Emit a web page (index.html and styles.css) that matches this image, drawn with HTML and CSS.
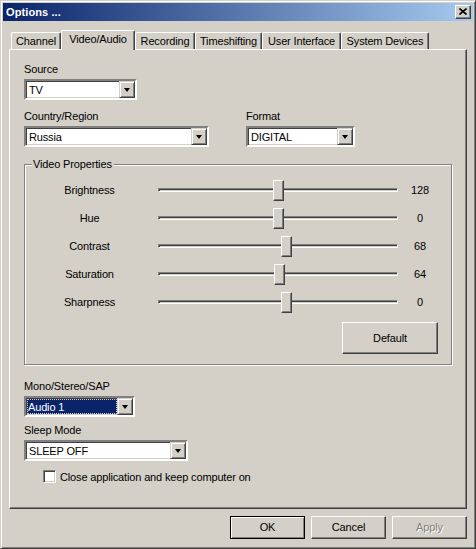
FILE: index.html
```html
<!DOCTYPE html>
<html>
<head>
<meta charset="utf-8">
<link rel="stylesheet" href="styles.css">
</head>
<body>
<div class="window">
  <div class="titlebar">
    <span class="title">Options ...</span>
    <span class="close"><svg width="8" height="7" viewBox="0 0 8 7"><path d="M0.5 0.5 L7.5 6.5 M7.5 0.5 L0.5 6.5" stroke="#000" stroke-width="1.6" fill="none"/></svg></span>
  </div>
  <div class="client">
    <div class="tabs">
      <div class="tab t-channel">Channel</div>
      <div class="tab tab-active t-video">Video/Audio</div>
      <div class="tab t-rec">Recording</div>
      <div class="tab t-time">Timeshifting</div>
      <div class="tab t-ui">User Interface</div>
      <div class="tab t-sys">System Devices</div>
    </div>
    <div class="panel">
      <div class="field">
        <div class="label">Source</div>
        <div class="combo c-source"><div class="combo-text">TV</div><div class="combo-btn"><span class="arrow"></span></div></div>
      </div>
      <div class="row2">
        <div class="field f-country">
          <div class="label">Country/Region</div>
          <div class="combo c-country"><div class="combo-text">Russia</div><div class="combo-btn"><span class="arrow"></span></div></div>
        </div>
        <div class="field">
          <div class="label">Format</div>
          <div class="combo c-format"><div class="combo-text">DIGITAL</div><div class="combo-btn"><span class="arrow"></span></div></div>
        </div>
      </div>
      <div class="group">
        <span class="legend">Video Properties</span>
        <div class="sliders">
          <div class="s-label">Brightness</div>
          <div class="track"><div class="thumb" style="left:114px"></div></div>
          <div class="s-value">128</div>

          <div class="s-label">Hue</div>
          <div class="track"><div class="thumb" style="left:114px"></div></div>
          <div class="s-value">0</div>

          <div class="s-label">Contrast</div>
          <div class="track"><div class="thumb" style="left:122px"></div></div>
          <div class="s-value">68</div>

          <div class="s-label">Saturation</div>
          <div class="track"><div class="thumb" style="left:115px"></div></div>
          <div class="s-value">64</div>

          <div class="s-label">Sharpness</div>
          <div class="track"><div class="thumb" style="left:122px"></div></div>
          <div class="s-value">0</div>
        </div>
        <div class="default-row"><div class="btn btn-big">Default</div></div>
      </div>
      <div class="field f-mono">
        <div class="label">Mono/Stereo/SAP</div>
        <div class="combo c-mono"><div class="combo-text sel"><span class="hl">Audio 1</span></div><div class="combo-btn"><span class="arrow"></span></div></div>
      </div>
      <div class="field f-sleep">
        <div class="label">Sleep Mode</div>
        <div class="combo c-sleep"><div class="combo-text">SLEEP OFF</div><div class="combo-btn"><span class="arrow"></span></div></div>
      </div>
      <div class="check-row"><span class="checkbox"></span><span class="check-text">Close application and keep computer on</span></div>
    </div>
    <div class="buttons">
      <div class="btn btn-default">OK</div>
      <div class="btn">Cancel</div>
      <div class="btn btn-disabled">Apply</div>
    </div>
  </div>
</div>
</body>
</html>
```
FILE: styles.css
```css
* { box-sizing: border-box; }
html, body { margin: 0; padding: 0; }
body {
  width: 476px;
  height: 549px;
  background: #d4d0c8;
  font-family: "Liberation Sans", Arial, sans-serif;
  font-size: 11px;
  letter-spacing: -0.15px;
  color: #000;
  overflow: hidden;
}
.window {
  width: 476px;
  height: 549px;
  background: #d4d0c8;
  border: 1px solid;
  border-color: #d4d0c8 #404040 #404040 #d4d0c8;
  box-shadow: inset 1px 1px 0 #fff, inset -1px -1px 0 #808080;
  padding: 2px;
}
.titlebar {
  height: 18px;
  background: linear-gradient(to right, #0a246a, #a6caf0);
  display: flex;
  align-items: center;
  justify-content: space-between;
  padding: 0 2px 0 3px;
}
.title {
  color: #fff;
  font-weight: bold;
  font-size: 11px;
  letter-spacing: 0.1px;
}
.close {
  width: 16px;
  height: 14px;
  background: #d4d0c8;
  border: 1px solid;
  border-color: #fff #404040 #404040 #fff;
  box-shadow: inset -1px -1px 0 #808080;
  display: flex;
  align-items: center;
  justify-content: center;
  padding-bottom: 1px;
  padding-right: 1px;
}
.close svg { display: block; }
.client {
  padding: 9px 6px 0 6px;
}
.tabs {
  display: flex;
  align-items: flex-end;
  height: 19px;
  margin-left: 2px;
  position: relative;
  z-index: 2;
}
.tab {
  height: 17px;
  background: #d4d0c8;
  border-top: 1px solid #fff;
  border-left: 1px solid #fff;
  border-right: 1px solid #404040;
  border-top-left-radius: 2px;
  border-top-right-radius: 2px;
  box-shadow: inset -1px 0 0 #808080;
  text-align: center;
  line-height: 15px;
  padding-top: 1px;
  white-space: nowrap;
}
.tab-active {
  height: 20px;
  margin-bottom: -1px;
  line-height: 15px;
  padding-top: 1px;
}
.t-channel { width: 50px; }
.t-video { width: 74px; }
.t-rec { width: 60px; }
.t-time { width: 67px; }
.t-ui { width: 79px; }
.t-sys { width: 88px; }

.panel {
  width: 458px;
  height: 460px;
  border: 1px solid;
  border-color: #fff #404040 #404040 #fff;
  box-shadow: inset -1px -1px 0 #808080;
  padding: 13px 0 0 14px;
  position: relative;
  z-index: 1;
}
.label {
  height: 13px;
  line-height: 13px;
  margin-bottom: 3px;
  white-space: nowrap;
}
.row2 {
  display: flex;
  margin-top: 10px;
}
.f-country { width: 222px; }
.combo {
  height: 21px;
  display: flex;
  background: #fff;
  border: 2px solid;
  border-color: #808080 #fff #fff #808080;
  box-shadow: inset 1px 1px 0 #404040, inset -1px -1px 0 #d4d0c8;
  padding: 1px;
}
.c-source { width: 113px; }
.c-country { width: 185px; }
.c-format { width: 109px; }
.c-mono { width: 111px; }
.c-sleep { width: 164px; }
.combo-text {
  flex: 1;
  line-height: 15px;
  padding: 1px 0 0 2px;
  white-space: nowrap;
  overflow: hidden;
}
.combo-text.sel { padding: 0; }
.hl {
  display: block;
  height: 15px;
  line-height: 16px;
  background: #0a246a;
  color: #fff;
  padding-left: 1px;
  outline: 1px dotted #d4d0c8;
  outline-offset: -1px;
}
.combo-btn {
  width: 16px;
  height: 17px;
  margin: -1px -1px -1px 0;
  background: #d4d0c8;
  border: 1px solid;
  border-color: #d4d0c8 #404040 #404040 #d4d0c8;
  box-shadow: inset 1px 1px 0 #fff, inset -1px -1px 0 #808080;
  display: flex;
  align-items: center;
  justify-content: center;
}
.arrow {
  width: 0;
  height: 0;
  border-left: 3.5px solid transparent;
  border-right: 3.5px solid transparent;
  border-top: 4px solid #000;
  margin-top: 1px;
}

.group {
  position: relative;
  width: 428px;
  margin-top: 17px;
  border: 1px solid #808080;
  box-shadow: inset 1px 1px 0 #fff, 1px 1px 0 #fff;
  padding: 11px 0 10px 0;
}
.legend {
  position: absolute;
  top: -7px;
  left: 7px;
  background: #d4d0c8;
  padding: 0 2px 0 1px;
  line-height: 13px;
}
.sliders {
  display: grid;
  grid-template-columns: 129px 240px 36px;
  column-gap: 4px;
  grid-auto-rows: 28px;
  align-items: center;
}
.s-label { text-align: center; }
.s-value { text-align: center; }
.track {
  position: relative;
  height: 4px;
  border: 1px solid;
  border-color: #808080 #fff #fff #808080;
  box-shadow: inset 1px 1px 0 #404040;
}
.thumb {
  position: absolute;
  top: -9px;
  width: 11px;
  height: 21px;
  background: #d4d0c8;
  border: 1px solid;
  border-color: #fff #404040 #404040 #fff;
  box-shadow: inset -1px -1px 0 #808080;
}
.default-row {
  display: flex;
  justify-content: flex-end;
  padding-right: 13px;
  margin-top: 6px;
}
.btn {
  width: 75px;
  height: 23px;
  background: #d4d0c8;
  border: 1px solid;
  border-color: #fff #404040 #404040 #fff;
  box-shadow: inset -1px -1px 0 #808080;
  display: flex;
  align-items: center;
  justify-content: center;
  padding-bottom: 1px;
}
.btn-big {
  width: 96px;
  height: 32px;
}
.btn-default {
  border: 1px solid #000;
  box-shadow: inset 1px 1px 0 #fff, inset -1px -1px 0 #808080;
}
.btn-disabled {
  color: #808080;
  text-shadow: 1px 1px 0 #fff;
}
.f-mono { margin-top: 15px; }
.f-sleep { margin-top: 7px; }
.check-row {
  display: flex;
  align-items: center;
  margin-top: 9px;
  margin-left: 19px;
  height: 13px;
}
.checkbox {
  width: 13px;
  height: 13px;
  background: #fff;
  border: 1px solid;
  border-color: #808080 #fff #fff #808080;
  box-shadow: inset 1px 1px 0 #404040, inset -1px -1px 0 #d4d0c8;
  margin-right: 4px;
}
.check-text { white-space: nowrap; }
.buttons {
  display: flex;
  justify-content: flex-end;
  gap: 6px;
  margin-top: 7px;
}
```
